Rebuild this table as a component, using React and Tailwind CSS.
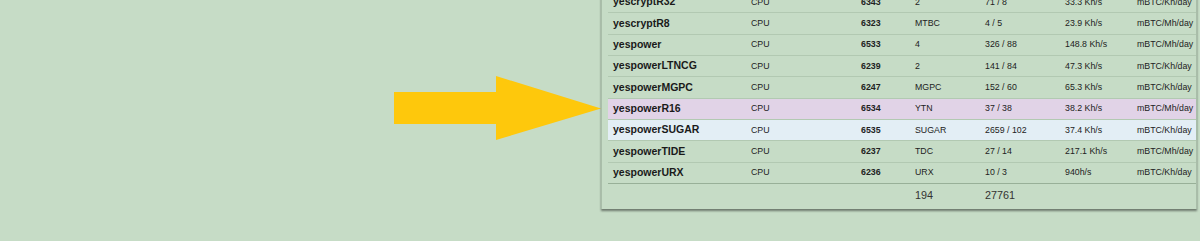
const rows = [
  ["yescryptR32", "6343", "2", "71 / 8", "33.3 Kh/s", "mBTC/Kh/day"],
  ["yescryptR8", "6323", "MTBC", "4 / 5", "23.9 Kh/s", "mBTC/Mh/day"],
  ["yespower", "6533", "4", "326 / 88", "148.8 Kh/s", "mBTC/Mh/day"],
  ["yespowerLTNCG", "6239", "2", "141 / 84", "47.3 Kh/s", "mBTC/Kh/day"],
  ["yespowerMGPC", "6247", "MGPC", "152 / 60", "65.3 Kh/s", "mBTC/Kh/day"],
  ["yespowerR16", "6534", "YTN", "37 / 38", "38.2 Kh/s", "mBTC/Mh/day", "purple"],
  ["yespowerSUGAR", "6535", "SUGAR", "2659 / 102", "37.4 Kh/s", "mBTC/Kh/day", "blue"],
  ["yespowerTIDE", "6237", "TDC", "27 / 14", "217.1 Kh/s", "mBTC/Mh/day"],
  ["yespowerURX", "6236", "URX", "10 / 3", "940h/s", "mBTC/Kh/day"],
];

const cols = "grid grid-cols-[138px_110px_54px_70px_80px_72px_64px]";

function Arrow() {
  return (
    <svg width="208" height="66" viewBox="0 0 208 66">
      <polygon
        points="0,16 102,16 102,0 207,32.5 102,64 102,48 0,48"
        fill="#fec80c"
      />
    </svg>
  );
}

function Row({ r, last }) {
  const [name, port, sym, workers, hash, unit, hl] = r;
  const bg =
    hl === "purple" ? "bg-[#e1d3e7]" : hl === "blue" ? "bg-[#e3eef5]" : "";
  return (
    <div
      className={`${cols} ${bg} h-[21.33px] items-center border-b ${
        last ? "border-[#98b098]" : "border-[#b2c9b2]"
      } text-[8.8px] text-[#222]`}
    >
      <div className="pl-[5px] text-[10.5px] font-bold text-[#1a1a1a]">{name}</div>
      <div className="pl-[5px]">CPU</div>
      <div className="pl-[5px] font-bold">{port}</div>
      <div className="pl-[5px]">{sym}</div>
      <div className="pl-[5px]">{workers}</div>
      <div className="pl-[5px]">{hash}</div>
      <div className="pl-[5px] whitespace-nowrap">{unit}</div>
    </div>
  );
}

export default function App() {
  return (
    <div className="w-[1200px] h-[241px] overflow-hidden bg-[#c6dcc6] flex items-start font-['Liberation_Sans',Arial,sans-serif]">
      <div className="w-[601px] shrink-0 pl-[394px] pt-[76px]">
        <Arrow />
      </div>
      <div className="w-[596px] shrink-0 -mt-[8px] bg-[#c6dcc6] border-x border-[#a9bea9] pl-[6px] pb-[3px] shadow-[0_2px_2px_rgba(0,0,0,0.45)]">
        {rows.map((r, i) => (
          <Row key={r[0]} r={r} last={i === rows.length - 1} />
        ))}
        <div className={`${cols} h-[22px] items-center text-[10.8px] text-[#333]`}>
          <div />
          <div />
          <div />
          <div className="pl-[5px]">194</div>
          <div className="pl-[5px]">27761</div>
          <div />
          <div />
        </div>
      </div>
    </div>
  );
}
